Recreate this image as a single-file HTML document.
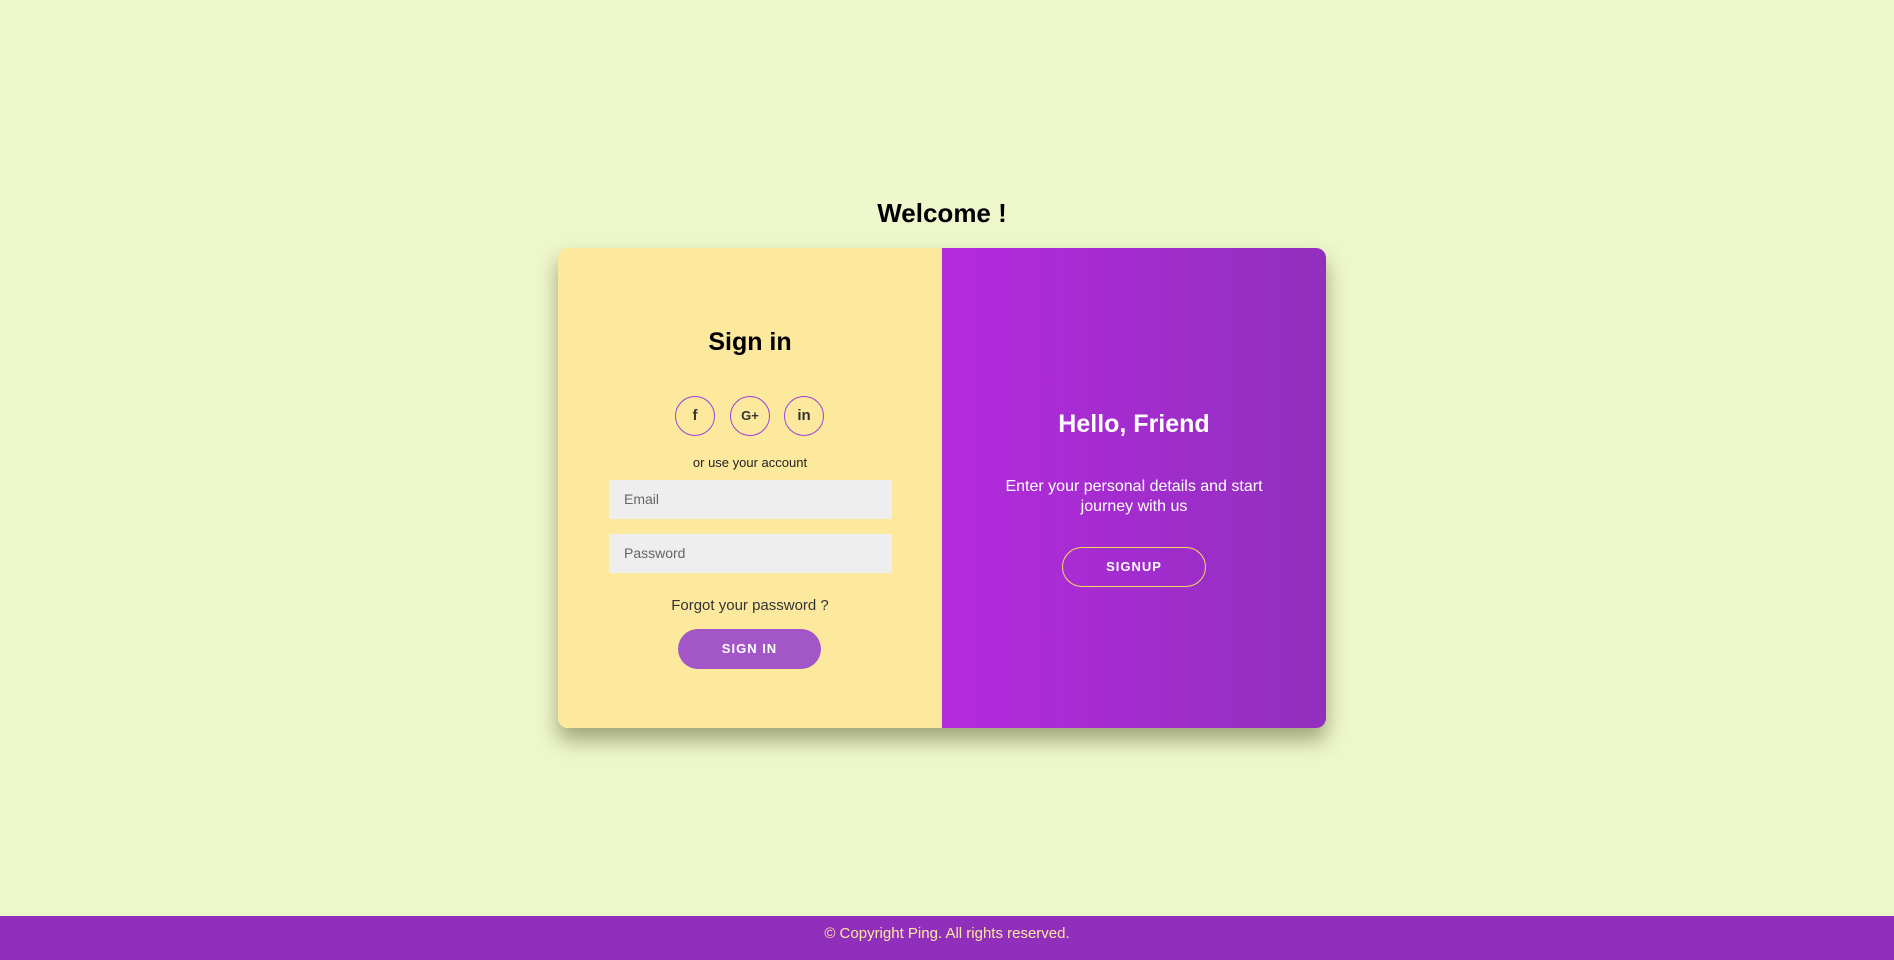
<!DOCTYPE html>
<html><head><meta charset="utf-8"><style>
*{box-sizing:border-box;margin:0;padding:0}
body{width:1894px;height:960px;background:#eef6cc;font-family:"Liberation Sans",sans-serif;position:relative;overflow:hidden}
.abs{position:absolute}
h1{position:absolute;left:0;width:1884px;text-align:center;top:198px;font-size:26px;font-weight:bold;color:#000}
.card{left:558px;top:248px;width:768px;height:480px;border-radius:10px;overflow:hidden;box-shadow:0 12px 20px rgba(60,70,20,.45)}
.left{left:0;top:0;width:384px;height:480px;background:#fde99e}
.right{left:384px;top:0;width:384px;height:480px;background:linear-gradient(90deg,#b42ade,#912fbd)}
.c{text-align:center;width:100%;left:0}
.soc{width:40px;height:40px;border:1.5px solid #9d3fd6;border-radius:50%;top:148px;text-align:center;line-height:37px;font-weight:bold;font-size:15px;color:#333}
.inp{left:51px;width:283px;height:39px;background:#eeeeee;font-size:14px;color:#666;padding-left:15px;line-height:39px}
.btn{border-radius:20px;text-align:center;font-weight:bold;font-size:13px;letter-spacing:1px;color:#fff;line-height:39px}
.foot{left:0;top:916px;width:1894px;height:44px;background:#912fbd;color:#fde99e;text-align:center;font-size:15px;line-height:36px}
</style></head><body>
<h1>Welcome !</h1>
<div class="abs card">
 <div class="abs left">
  <div class="abs c" style="top:80px;font-size:25px;font-weight:bold;color:#000">Sign in</div>
  <div class="abs soc" style="left:117px">f</div>
  <div class="abs soc" style="left:172px;font-size:13px">G+</div>
  <div class="abs soc" style="left:226px">in</div>
  <div class="abs c" style="top:207px;font-size:13px;color:#222">or use your account</div>
  <div class="abs inp" style="top:232px">Email</div>
  <div class="abs inp" style="top:286px">Password</div>
  <div class="abs c" style="top:349px;font-size:15px;color:#333">Forgot your password ?</div>
  <div class="abs btn" style="left:120px;top:381px;width:143px;height:40px;background:#a256c8">SIGN IN</div>
 </div>
 <div class="abs right">
  <div class="abs c" style="top:162px;font-size:25px;font-weight:bold;color:#fff">Hello, Friend</div>
  <div class="abs c" style="top:229px;font-size:16px;color:#fff;line-height:20px;padding:0 50px">Enter your personal details and start journey with us</div>
  <div class="abs btn" style="left:120px;top:299px;width:144px;height:40px;border:1.5px solid #f2dc60;line-height:37px">SIGNUP</div>
 </div>
</div>
<div class="abs foot">© Copyright Ping. All rights reserved.</div>
</body></html>
